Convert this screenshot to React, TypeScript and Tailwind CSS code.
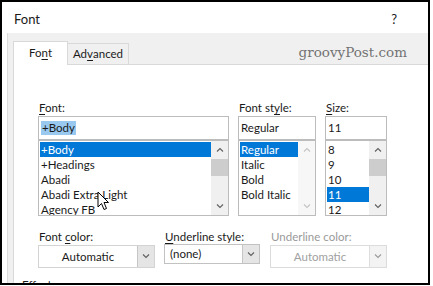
import React from 'react';

const fontRows = ['+Body', '+Headings', 'Abadi', 'Abadi Extra Light', 'Agency FB'];
const styleRows = ['Regular', 'Italic', 'Bold', 'Bold Italic'];
const sizeRows = ['8', '9', '10', '11', '12'];

const Chevron = ({ up, color }: { up?: boolean; color: string }) => (
    <svg width="8" height="5" viewBox="0 0 8 5" fill="none">
        <path d={up ? 'M1 4.5 L4 1.5 L7 4.5' : 'M1 0.5 L4 3.5 L7 0.5'} stroke={color} strokeWidth="1.1" />
    </svg>
);

const Scrollbar = ({ disabled }: { disabled?: boolean }) => (
    <div className={disabled ? 'flex w-[17px] flex-col bg-[#f7f7f7]' : 'flex w-[17px] flex-col bg-[#f0f0f0]'}>
        <div className="flex h-[17px] items-center justify-center">
            <Chevron up color={disabled ? '#c4c4c4' : '#606060'} />
        </div>
        {!disabled && <div className="mt-px h-[17px] bg-[#cdcdcd]" />}
        <div className="flex-1" />
        <div className="flex h-[17px] items-center justify-center">
            <Chevron color={disabled ? '#c4c4c4' : '#606060'} />
        </div>
    </div>
);

const ListBox = ({ rows, selected, disabledBar, width }: { rows: string[]; selected: number; disabledBar?: boolean; width: string }) => (
    <div className={`flex h-[76px] overflow-hidden border border-[#bcbcbc] bg-white ${width}`}>
        <div className="flex-1 overflow-hidden pl-px pt-px">
            {rows.map((r, i) => (
                <div
                    key={r}
                    className={i === selected ? 'h-[15px] bg-[#0078d7] pl-px leading-[15px] text-white' : 'h-[15px] pl-px leading-[15px]'}
                >
                    {r}
                </div>
            ))}
        </div>
        <Scrollbar disabled={disabledBar} />
    </div>
);

const Dropdown = ({ value, center, disabled, boxClass }: { value: string; center?: boolean; disabled?: boolean; boxClass: string }) => (
    <div className={`flex bg-white ${boxClass}`}>
        <div className={center ? 'flex flex-1 items-center justify-center' : 'flex flex-1 items-center pl-[5px]'}>
            <span className={disabled ? 'text-[#a0a0a0]' : ''}>{value}</span>
        </div>
        <div
            className={
                disabled
                    ? 'flex w-[17px] items-center justify-center border-l border-[#dedede] bg-[#f3f3f3]'
                    : 'flex w-[17px] items-center justify-center border-l border-[#c6c6c6] bg-[#e5e5e5]'
            }
        >
            <Chevron color={disabled ? '#9a9a9a' : '#606060'} />
        </div>
    </div>
);

const Cursor = () => (
    <svg className="absolute left-[97px] top-[191px]" width="13" height="20" viewBox="0 0 13 20">
        <path d="M1 1 L1 16 L4.5 12.5 L7 18.5 L9.5 17.5 L7 11.5 L11.5 11.5 Z" fill="white" stroke="black" strokeWidth="1" strokeLinejoin="round" />
    </svg>
);

export default function App() {
    return (
        <div className="relative h-[286px] w-[433px] overflow-hidden bg-white font-['Lato',sans-serif] text-[11.5px] text-[#1a1a1a]">
            <div className="flex h-[285px] w-[430px] flex-col overflow-hidden border-2 border-black">
                <div className="flex h-[31px] shrink-0 items-center justify-between pl-[12px] pr-[31px] pt-[4px] text-[13px]">
                    <span>Font</span>
                    <span>?</span>
                </div>
                <div className="ml-[5px] flex flex-1 flex-col border-l border-[#dcdcdc] bg-[#f0f0f0]">
                    <div className="flex h-[31px] shrink-0 items-end pl-[5px]">
                        <div className="relative z-10 -mb-px flex h-[24px] w-[55px] items-center justify-center border border-b-0 border-[#d9d9d9] bg-white pb-[2px]">
                            Fo<u className="underline-offset-2">n</u>t
                        </div>
                        <div className="flex h-[21px] w-[61px] items-center justify-center border border-b-0 border-l-0 border-[#d9d9d9]">
                            Ad<u className="underline-offset-2">v</u>anced
                        </div>
                        <div className="mb-[5px] ml-auto mr-[21px] font-['DejaVu_Serif',serif] text-[13.5px] leading-[14px] text-[#737373]">
                            groovyPost.com
                        </div>
                    </div>
                    <div className="ml-[5px] flex flex-1 flex-col border-l border-t border-[#d9d9d9] bg-white pl-[24px] pt-[35px]">
                        <div className="flex">
                            <div className="flex w-[191px] flex-col">
                                <div className="mb-px h-[15px] pl-px leading-[15px]">
                                    <u className="underline-offset-2">F</u>ont:
                                </div>
                                <div className="flex h-[24px] items-center border border-[#bcbcbc] pl-[2px]">
                                    <span className="bg-[#99c9ef] px-px leading-[14px]">+Body</span>
                                </div>
                                <ListBox rows={fontRows} selected={0} width="w-[191px]" />
                            </div>
                            <div className="ml-[9px] flex w-[78px] flex-col">
                                <div className="mb-px h-[15px] pl-px leading-[15px]">
                                    Font st<u className="underline-offset-2">y</u>le:
                                </div>
                                <div className="flex h-[24px] items-center border border-[#bcbcbc] pl-[2px]">Regular</div>
                                <ListBox rows={styleRows} selected={0} disabledBar width="w-[78px]" />
                            </div>
                            <div className="ml-[9px] flex w-[62px] flex-col">
                                <div className="mb-px h-[15px] pl-px leading-[15px]">
                                    <u className="underline-offset-2">S</u>ize:
                                </div>
                                <div className="flex h-[24px] items-center border border-[#bcbcbc] pl-[2px]">11</div>
                                <ListBox rows={sizeRows} selected={3} width="w-[62px]" />
                            </div>
                        </div>
                        <div className="mt-[13px] flex items-start">
                            <div className="flex w-[117px] flex-col">
                                <div className="mb-px h-[15px] pl-px leading-[15px]">
                                    Font <u className="underline-offset-2">c</u>olor:
                                </div>
                                <Dropdown value="Automatic" center boxClass="h-[23px] w-[117px] border border-[#d3d3d3]" />
                            </div>
                            <div className="ml-[9px] flex w-[96px] flex-col">
                                <div className="h-[15px] pl-px leading-[15px]">
                                    <u className="underline-offset-2">U</u>nderline style:
                                </div>
                                <Dropdown value="(none)" boxClass="h-[20px] w-[96px] border border-[#c2c2c2]" />
                            </div>
                            <div className="ml-[10px] flex w-[117px] flex-col">
                                <div className="mb-px h-[15px] pl-px leading-[15px] text-[#9a9a9a]">Underline color:</div>
                                <Dropdown value="Automatic" center disabled boxClass="h-[23px] w-[117px] border border-[#dcdcdc]" />
                            </div>
                        </div>
                        <div className="-ml-[16px] mt-[9px] leading-[15px]">Effects</div>
                    </div>
                </div>
            </div>
            <Cursor />
        </div>
    );
}
